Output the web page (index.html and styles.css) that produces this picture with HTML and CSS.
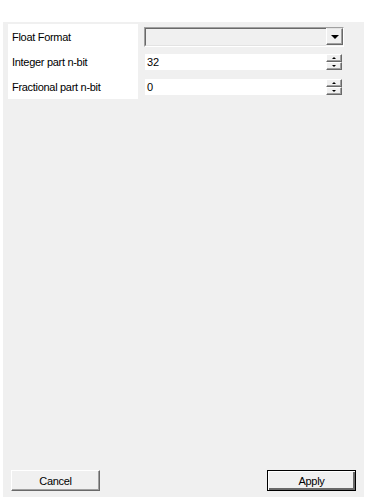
FILE: index.html
```html
<!DOCTYPE html>
<html>
<head>
<meta charset="utf-8">
<link rel="stylesheet" href="styles.css">
</head>
<body>
<div class="panel">
  <div class="form">
    <div class="label">Float Format</div>
    <div class="cell">
      <div class="combo">
        <div class="combo-field"></div>
        <div class="btn3d drop"><span class="arrow-down big"></span></div>
      </div>
    </div>
    <div class="label">Integer part n-bit</div>
    <div class="cell cell-spin">
      <div class="spin">
        <div class="spin-field">32</div>
        <div class="spin-btns">
          <div class="btn3d sbtn"><span class="arrow-up"></span></div>
          <div class="btn3d sbtn"><span class="arrow-down"></span></div>
        </div>
      </div>
    </div>
    <div class="label">Fractional part n-bit</div>
    <div class="cell cell-spin">
      <div class="spin">
        <div class="spin-field">0</div>
        <div class="spin-btns">
          <div class="btn3d sbtn"><span class="arrow-up"></span></div>
          <div class="btn3d sbtn"><span class="arrow-down"></span></div>
        </div>
      </div>
    </div>
  </div>
  <div class="spacer"></div>
  <div class="buttons">
    <button class="pbtn">Cancel</button>
    <button class="pbtn default">Apply</button>
  </div>
</div>
</body>
</html>
```
FILE: styles.css
```css
html, body {
  margin: 0;
  padding: 0;
  background: #ffffff;
  font-family: "Liberation Sans", Arial, sans-serif;
  font-size: 11px;
  color: #000;
}
.panel {
  margin: 22px 0 0 3px;
  width: 361px;
  height: 475px;
  background: #f0f0f0;
  display: flex;
  flex-direction: column;
}
.form {
  margin: 2px 0 0 5px;
  display: grid;
  grid-template-columns: 130px 200px;
  grid-template-rows: 25px 25px 25px;
  column-gap: 6px;
}
.label {
  background: #fff;
  padding-left: 4px;
  display: flex;
  align-items: center;
  letter-spacing: -0.3px;
}
.cell {
  padding-top: 3px;
}
.cell-spin {
  padding-top: 5px;
}
.combo {
  height: 20px;
  box-sizing: border-box;
  border-top: 1px solid #a0a0a0;
  border-left: 1px solid #a0a0a0;
  border-right: 1px solid #ffffff;
  border-bottom: 1px solid #ffffff;
  display: flex;
}
.combo-field {
  flex: 1;
  box-sizing: border-box;
  border-top: 1px solid #696969;
  border-left: 1px solid #696969;
  border-right: 1px solid #e3e3e3;
  border-bottom: 1px solid #e3e3e3;
  border-right: none;
  background: #f0f0f0;
}
.btn3d {
  box-sizing: border-box;
  background: #f0f0f0;
  border-top: 1px solid #ffffff;
  border-left: 1px solid #ffffff;
  border-right: 1px solid #696969;
  border-bottom: 1px solid #696969;
  box-shadow: inset -1px -1px 0 #a0a0a0;
  display: flex;
  align-items: center;
  justify-content: center;
}
.drop {
  width: 17px;
  height: 17px;
  border-top-color: #e3e3e3;
}
.spin {
  height: 16px;
  display: flex;
}
.spin-field {
  flex: 1;
  background: #fff;
  padding-left: 2px;
  line-height: 16px;
  margin-left: 1px;
}
.spin-btns {
  width: 17px;
  margin-right: 1px;
  display: flex;
  flex-direction: column;
}
.sbtn {
  height: 8px;
  width: 16px;
}
.arrow-down {
  width: 0;
  height: 0;
  border-left: 2px solid transparent;
  border-right: 2px solid transparent;
  border-top: 2px solid #000;
}
.arrow-down.big {
  border-left-width: 4px;
  border-right-width: 4px;
  border-top-width: 4px;
  margin-top: 1px;
}
.arrow-up {
  width: 0;
  height: 0;
  border-left: 2px solid transparent;
  border-right: 2px solid transparent;
  border-bottom: 2px solid #000;
}
.spacer {
  flex: 1;
}
.buttons {
  display: flex;
  justify-content: space-between;
  padding: 0 8px 6px 8px;
}
.pbtn {
  width: 89px;
  height: 21px;
  box-sizing: border-box;
  font-family: "Liberation Sans", Arial, sans-serif;
  font-size: 11px;
  letter-spacing: -0.3px;
  color: #000;
  background: #f0f0f0;
  padding: 0;
  border-top: 1px solid #ffffff;
  border-left: 1px solid #ffffff;
  border-right: 1px solid #696969;
  border-bottom: 1px solid #696969;
  box-shadow: inset -1px -1px 0 #a0a0a0;
}
.pbtn.default {
  border: 1px solid #000;
  box-shadow: inset 1px 1px 0 #fff, inset -2px -2px 0 #696969;
}
```
